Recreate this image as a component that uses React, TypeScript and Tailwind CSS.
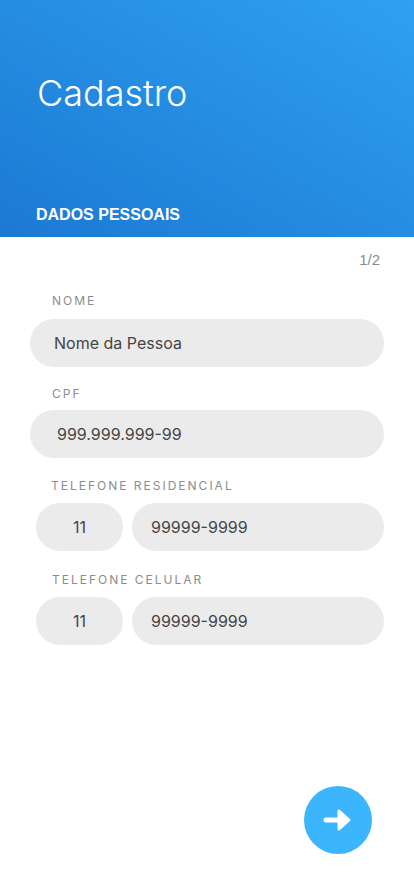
import React from "react";

const Label = ({ children, className = "" }: { children: React.ReactNode; className?: string }) => (
  <div className={`text-[12px] leading-[14px] tracking-[2px] text-[#8c8c8c] ${className}`}>{children}</div>
);

const Pill = ({ children, className = "" }: { children: React.ReactNode; className?: string }) => (
  <div className={`h-[48px] rounded-full bg-[#ebebeb] flex items-center text-[16px] text-[#454545] ${className}`}>{children}</div>
);

export default function App() {
  return (
    <div className="w-[414px] h-[896px] bg-white flex flex-col" style={{ fontFamily: "Inter, 'Noto Sans', sans-serif" }}>
      <div className="h-[237px] bg-gradient-to-tr from-[#1c79d3] to-[#2fa1f1] flex flex-col pl-[36px]">
        <div className="mt-[71px] ml-[1px] text-[36px] leading-[44px] font-light text-white">Cadastro</div>
        <div
          className="mt-auto mb-[12px] text-[16px] leading-[20px] font-bold text-white"
          style={{ fontFamily: "'Liberation Sans', Arial, sans-serif" }}
        >
          DADOS PESSOAIS
        </div>
      </div>
      <div className="flex flex-col">
        <div
          className="self-end mr-[34px] mt-[14px] text-[15px] leading-[18px] text-[#8a8a8a]"
          style={{ fontFamily: "'Liberation Sans', Arial, sans-serif" }}
        >
          1/2
        </div>
        <Label className="ml-[52px] mt-[25px]">NOME</Label>
        <Pill className="mx-[30px] mt-[11px] pl-[24px]">Nome da Pessoa</Pill>
        <Label className="ml-[52px] mt-[20px]">CPF</Label>
        <Pill className="mx-[30px] mt-[9px] pl-[27px]">999.999.999-99</Pill>
        <Label className="ml-[51px] mt-[21px]">TELEFONE RESIDENCIAL</Label>
        <div className="flex gap-[9px] ml-[36px] mr-[30px] mt-[10px]">
          <Pill className="w-[87px] justify-center">11</Pill>
          <Pill className="flex-1 pl-[19px]">99999-9999</Pill>
        </div>
        <Label className="ml-[52px] mt-[22px]">TELEFONE CELULAR</Label>
        <div className="flex gap-[9px] ml-[36px] mr-[30px] mt-[10px]">
          <Pill className="w-[87px] justify-center">11</Pill>
          <Pill className="flex-1 pl-[19px]">99999-9999</Pill>
        </div>
      </div>
      <div className="mt-auto mb-[42px] mr-[42px] self-end">
        <button className="w-[68px] h-[68px] rounded-full bg-[#3bb5fc] flex items-center justify-center">
          <svg width="30" height="26" viewBox="0 0 30 26">
            <path d="M3 13 H17" stroke="white" strokeWidth="5" strokeLinecap="round" />
            <path d="M16 4 L26 13 L16 22 Z" fill="white" stroke="white" strokeWidth="3" strokeLinejoin="round" />
          </svg>
        </button>
      </div>
    </div>
  );
}
